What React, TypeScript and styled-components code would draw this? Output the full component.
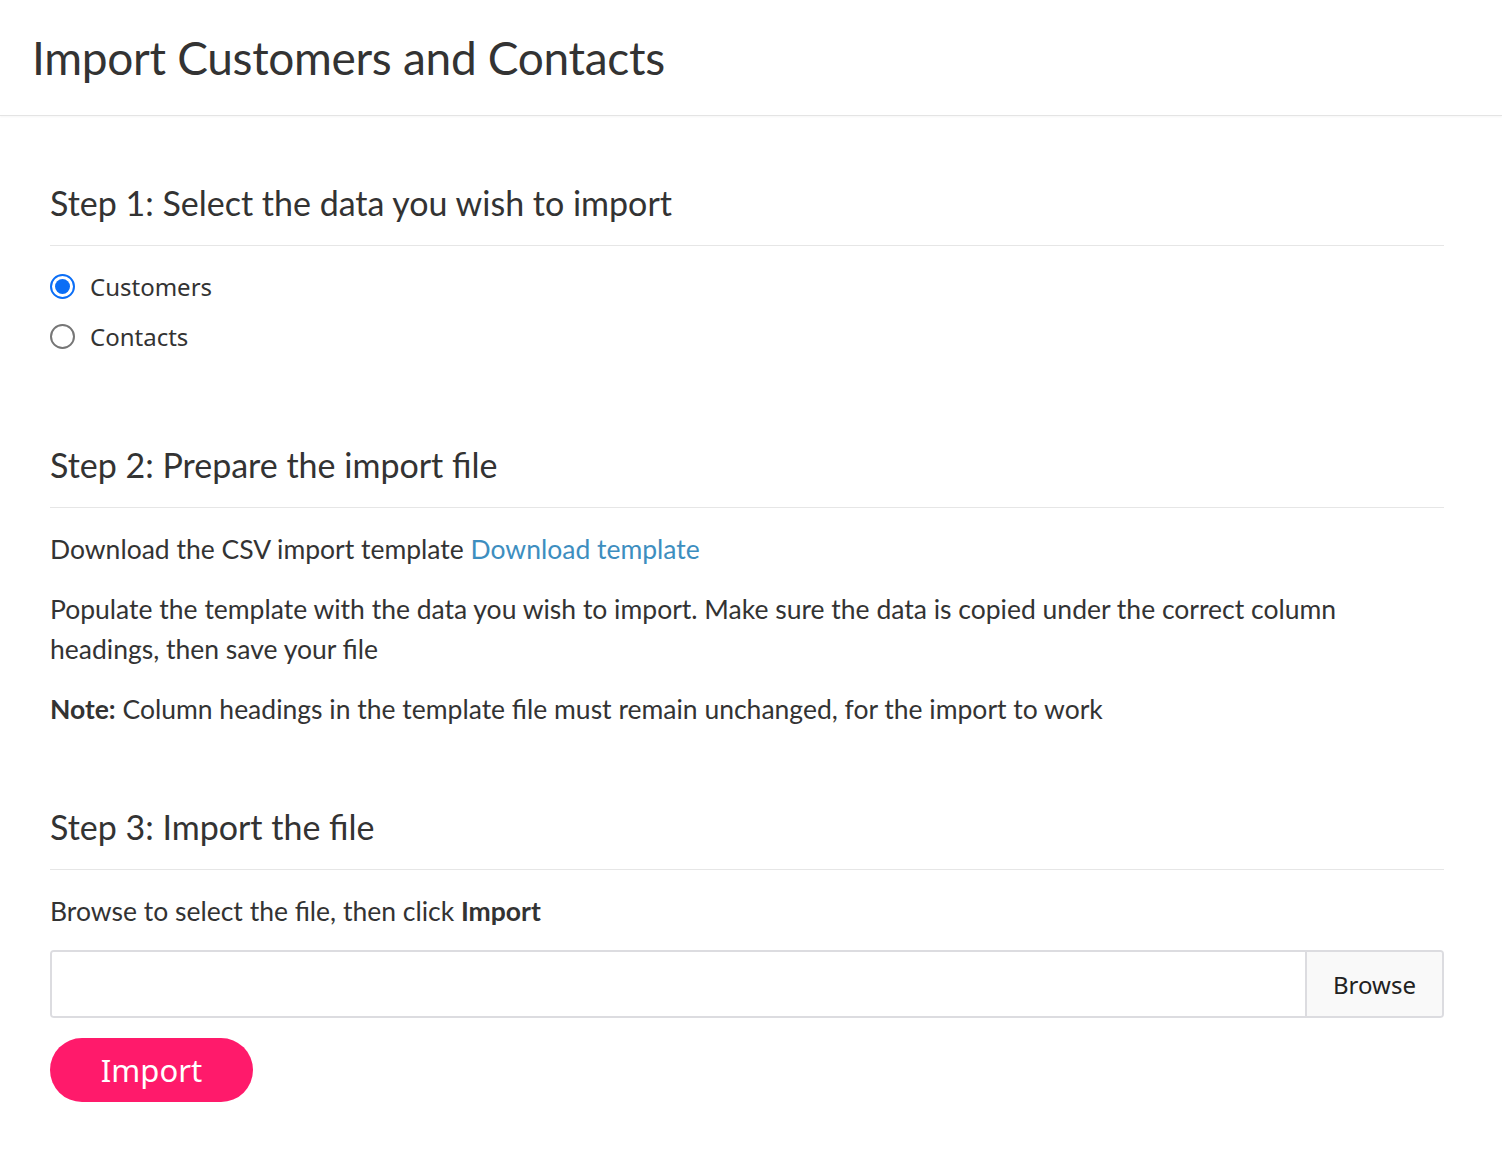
import styled, { createGlobalStyle } from "styled-components";

const GlobalStyle = createGlobalStyle`
  * { box-sizing: border-box; }
  body {
    margin: 0;
    background: #ffffff;
    color: #333333;
    font-family: Lato, "Noto Sans", sans-serif;
  }
`;

const Header = styled.header`
  height: 116px;
  display: flex;
  align-items: center;
  padding: 0 32px 0;
  border-bottom: 1px solid #e4e4e4;
  box-shadow: 0 1px 2px rgba(0, 0, 0, 0.04);
`;

const PageTitle = styled.h1`
  margin: 0;
  font-size: 46px;
  font-weight: 400;
  color: #333333;
  letter-spacing: -0.3px;
`;

const Content = styled.main`
  padding: 65px 58px 40px 50px;
`;

const Section = styled.section<{ $gap?: number }>`
  margin-bottom: ${(p) => p.$gap ?? 0}px;
`;

const StepTitle = styled.h2`
  margin: 0;
  font-size: 34px;
  line-height: 44px;
  font-weight: 400;
  color: #333333;
  padding-bottom: 20px;
  border-bottom: 1px solid #e6e6e6;
`;

const RadioList = styled.div`
  margin-top: 15px;
  display: flex;
  flex-direction: column;
`;

const RadioRow = styled.label`
  height: 50px;
  display: flex;
  align-items: center;
  gap: 15px;
  font-family: "Noto Sans", sans-serif;
  font-size: 24px;
  color: #333333;
  cursor: pointer;
`;

const RadioDot = styled.span<{ $checked?: boolean }>`
  width: 25px;
  height: 25px;
  border-radius: 50%;
  border: 2px solid ${(p) => (p.$checked ? "#0b6ef6" : "#767676")};
  display: flex;
  align-items: center;
  justify-content: center;
  flex-shrink: 0;

  &::after {
    content: "";
    width: 15px;
    height: 15px;
    border-radius: 50%;
    background: ${(p) => (p.$checked ? "#0b6ef6" : "transparent")};
  }
`;

const Para = styled.p<{ $top?: number }>`
  margin: ${(p) => p.$top ?? 20}px 0 0;
  font-size: 26.5px;
  line-height: 40px;
  color: #333333;
  max-width: 1320px;
`;

const Link = styled.a`
  color: #3d8ebf;
  text-decoration: none;
`;

const FileGroup = styled.div`
  margin-top: 19px;
  display: flex;
  height: 68px;
  border: 2px solid #dcdce0;
  border-radius: 4px;
  overflow: hidden;
`;

const FileField = styled.div`
  flex: 1;
  background: #ffffff;
`;

const BrowseButton = styled.button`
  width: 137px;
  border: none;
  border-left: 2px solid #dcdce0;
  background: #f9f9f9;
  font-family: "Noto Sans", sans-serif;
  font-size: 24px;
  color: #222222;
  cursor: pointer;
`;

const ImportButton = styled.button`
  margin-top: 20px;
  width: 203px;
  height: 64px;
  border: none;
  border-radius: 32px;
  background: #ff1a6b;
  color: #ffffff;
  font-family: "Noto Sans", sans-serif;
  font-size: 31px;
  cursor: pointer;
`;

export default function App() {
  return (
    <>
      <GlobalStyle />
      <Header>
        <PageTitle>Import Customers and Contacts</PageTitle>
      </Header>
      <Content>
        <Section $gap={82}>
          <StepTitle>Step 1: Select the data you wish to import</StepTitle>
          <RadioList>
            <RadioRow>
              <RadioDot $checked />
              Customers
            </RadioRow>
            <RadioRow>
              <RadioDot />
              Contacts
            </RadioRow>
          </RadioList>
        </Section>
        <Section $gap={76}>
          <StepTitle>Step 2: Prepare the import file</StepTitle>
          <Para $top={21}>
            Download the CSV import template <Link href="#">Download template</Link>
          </Para>
          <Para>
            Populate the template with the data you wish to import. Make sure the data is copied
            under the correct column headings, then save your file
          </Para>
          <Para>
            <b>Note:</b> Column headings in the template file must remain unchanged, for the
            import to work
          </Para>
        </Section>
        <Section>
          <StepTitle>Step 3: Import the file</StepTitle>
          <Para $top={21}>
            Browse to select the file, then click <b>Import</b>
          </Para>
          <FileGroup>
            <FileField />
            <BrowseButton type="button">Browse</BrowseButton>
          </FileGroup>
          <ImportButton type="button">Import</ImportButton>
        </Section>
      </Content>
    </>
  );
}
